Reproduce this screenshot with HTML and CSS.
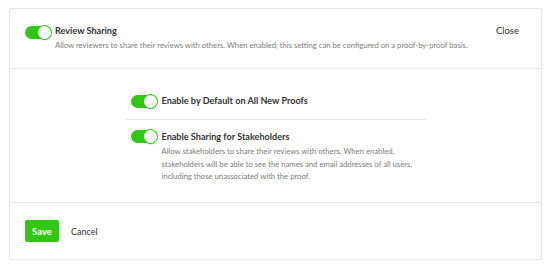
FILE: index.html
```html
<!DOCTYPE html>
<html lang="en">
<head>
    <meta charset="UTF-8">
    <meta name="viewport" content="width=device-width, initial-scale=1.0">
    <title>Review Sharing</title>
    <link rel="stylesheet" href="styles.css">
</head>
<body>
    <div class="sharing-card">
        <div class="card-header">
            <span class="toggle on"></span>
            <div class="setting-text">
                <h4>Review Sharing</h4>
                <p>Allow reviewers to share their reviews with others. When enabled, this setting can be configured on a proof-by-proof basis.</p>
            </div>
            <button class="close-button">Close</button>
        </div>

        <div class="card-body">
            <div class="options">
                <div class="option-row first">
                    <span class="toggle on"></span>
                    <div class="setting-text">
                        <h4>Enable by Default on All New Proofs</h4>
                    </div>
                </div>
                <div class="option-row">
                    <span class="toggle on"></span>
                    <div class="setting-text">
                        <h4>Enable Sharing for Stakeholders</h4>
                        <p>Allow stakeholders to share their reviews with others. When enabled, stakeholders will be able to see the names and email addresses of all users, including those unassociated with the proof.</p>
                    </div>
                </div>
            </div>
        </div>

        <div class="card-footer">
            <button class="save-button">Save</button>
            <button class="cancel-button">Cancel</button>
        </div>
    </div>
</body>
</html>
```

FILE: styles.css
```css
*{
    margin: 0;
    box-sizing: border-box;
}
body{
    padding: 8px 8px 8px 9px;
    font-family: "Lato", "Open Sans", sans-serif;
    color: rgb(51, 51, 51);
    background-color: white;
}

.sharing-card{
    width: 533px;
    height: 252px;
    border: 1px solid rgb(230, 230, 232);
    border-radius: 2px;
    display: flex;
    flex-direction: column;
}

.toggle{
    flex: none;
    position: relative;
    width: 26px;
    height: 13px;
    border-radius: 7px;
    background-color: rgb(50, 198, 22);
}

.toggle::after{
    content: "";
    position: absolute;
    top: 0;
    right: 0;
    width: 13px;
    height: 13px;
    border-radius: 50%;
    background-color: white;
    box-shadow: 0 0 0 1px rgb(50, 198, 22), 0 1px 2px rgba(0, 0, 0, 0.25);
}

.setting-text h4{
    font-size: 9.1px;
    font-weight: 700;
    line-height: 14px;
}

.setting-text p{
    font-size: 7.7px;
    line-height: 12.5px;
    color: rgb(125, 125, 125);
}

.card-header{
    height: 60px;
    padding: 17px 22px 0 15px;
    display: flex;
    align-items: flex-start;
    gap: 4px;
    border-bottom: 1px solid rgb(230, 230, 232);
}

.card-header .setting-text{
    flex: 1;
    margin-top: -2px;
}

.card-header .setting-text p{
    margin-top: 1px;
}

.close-button{
    border: none;
    background: none;
    padding: 0;
    font-family: inherit;
    font-size: 9.5px;
    line-height: 14px;
    color: rgb(51, 51, 51);
    cursor: pointer;
    margin-top: -2px;
}

.card-body{
    height: 134px;
    border-bottom: 1px solid rgb(230, 230, 232);
    display: flex;
    justify-content: center;
    padding-top: 26px;
}

.options{
    width: 300px;
}

.option-row{
    display: flex;
    align-items: flex-start;
    gap: 5px;
    padding: 0 5px;
}

.option-row .setting-text{
    margin-top: 0;
}

.option-row .setting-text p{
    margin-top: 1px;
}

.option-row.first{
    padding-bottom: 11px;
    border-bottom: 1px solid rgb(230, 230, 232);
    margin-bottom: 10px;
}

.option-row.first .setting-text{
    margin-top: -1px;
}

.card-footer{
    flex: 1;
    display: flex;
    align-items: center;
    gap: 12px;
    padding: 0 15px;
}

.save-button{
    width: 34px;
    height: 22px;
    border: none;
    border-radius: 2px;
    background-color: rgb(50, 198, 22);
    color: white;
    font-family: inherit;
    font-size: 9.5px;
    font-weight: 700;
    cursor: pointer;
}

.cancel-button{
    border: none;
    background: none;
    padding: 0;
    font-family: inherit;
    font-size: 9px;
    color: rgb(51, 51, 51);
    cursor: pointer;
}
```
